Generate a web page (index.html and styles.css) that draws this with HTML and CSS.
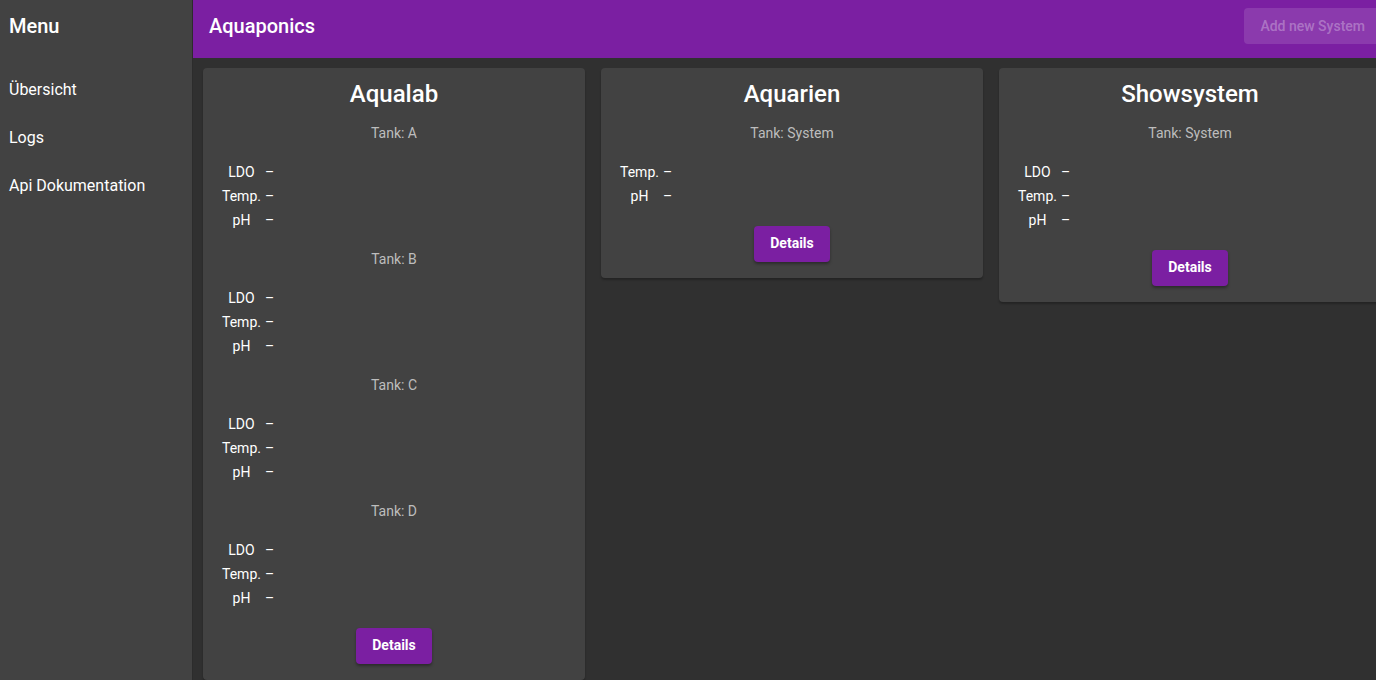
FILE: index.html
```html
<!DOCTYPE html>
<html lang="de">
<head>
<meta charset="utf-8">
<title>Aquaponics</title>
<link rel="stylesheet" href="styles.css">
</head>
<body>
<div class="app">
  <aside class="sidebar">
    <div class="menu-title">Menu</div>
    <nav class="menu">
      <a class="menu-item">Übersicht</a>
      <a class="menu-item">Logs</a>
      <a class="menu-item">Api Dokumentation</a>
    </nav>
  </aside>
  <div class="content">
    <header class="topbar">
      <div class="app-title">Aquaponics</div>
      <button class="add-btn" disabled>Add new System</button>
    </header>
    <main class="main">
      <section class="card">
        <h2 class="card-title">Aqualab</h2>
        <div class="tank">Tank: A</div>
        <table class="vals">
          <tr><th>LDO</th><td>–</td></tr>
          <tr><th>Temp.</th><td>–</td></tr>
          <tr><th>pH</th><td>–</td></tr>
        </table>
        <div class="tank">Tank: B</div>
        <table class="vals">
          <tr><th>LDO</th><td>–</td></tr>
          <tr><th>Temp.</th><td>–</td></tr>
          <tr><th>pH</th><td>–</td></tr>
        </table>
        <div class="tank">Tank: C</div>
        <table class="vals">
          <tr><th>LDO</th><td>–</td></tr>
          <tr><th>Temp.</th><td>–</td></tr>
          <tr><th>pH</th><td>–</td></tr>
        </table>
        <div class="tank">Tank: D</div>
        <table class="vals">
          <tr><th>LDO</th><td>–</td></tr>
          <tr><th>Temp.</th><td>–</td></tr>
          <tr><th>pH</th><td>–</td></tr>
        </table>
        <div class="actions"><button class="details">Details</button></div>
      </section>
      <section class="card">
        <h2 class="card-title">Aquarien</h2>
        <div class="tank">Tank: System</div>
        <table class="vals">
          <tr><th>Temp.</th><td>–</td></tr>
          <tr><th>pH</th><td>–</td></tr>
        </table>
        <div class="actions"><button class="details">Details</button></div>
      </section>
      <section class="card">
        <h2 class="card-title">Showsystem</h2>
        <div class="tank">Tank: System</div>
        <table class="vals">
          <tr><th>LDO</th><td>–</td></tr>
          <tr><th>Temp.</th><td>–</td></tr>
          <tr><th>pH</th><td>–</td></tr>
        </table>
        <div class="actions"><button class="details">Details</button></div>
      </section>
    </main>
  </div>
</div>
</body>
</html>
```
FILE: styles.css
```css
html, body {
  margin: 0;
  padding: 0;
  height: 100%;
  overflow: hidden;
  background: #303030;
  font-family: Roboto, "Liberation Sans", sans-serif;
  color: #fff;
}
.app {
  display: flex;
  height: 100%;
}
.sidebar {
  width: 192px;
  flex: none;
  background: #424242;
  border-right: 1px solid #2c2c2c;
}
.menu-title {
  height: 52px;
  line-height: 52px;
  padding-left: 9px;
  font-size: 20px;
  font-weight: 500;
}
.menu {
  display: flex;
  flex-direction: column;
  padding-top: 14px;
}
.menu-item {
  height: 48px;
  line-height: 48px;
  padding-left: 9px;
  font-size: 16px;
}
.content {
  flex: none;
  width: 1200px;
  display: flex;
  flex-direction: column;
}
.topbar {
  height: 58px;
  flex: none;
  background: #7b1fa2;
  display: flex;
  align-items: flex-start;
  justify-content: space-between;
  padding-left: 16px;
}
.app-title {
  font-size: 20px;
  font-weight: 500;
  line-height: 52px;
}
.add-btn {
  margin-top: 8px;
  margin-right: 12px;
  height: 36px;
  padding: 0 16px;
  border: none;
  border-radius: 4px;
  background: rgba(255, 255, 255, 0.12);
  color: rgba(255, 255, 255, 0.3);
  font-family: inherit;
  font-size: 14px;
  font-weight: 500;
}
.main {
  display: flex;
  align-items: flex-start;
  gap: 16px;
  padding: 10px;
}
.card {
  width: 382px;
  flex: none;
  box-sizing: border-box;
  background: #424242;
  border-radius: 4px;
  box-shadow: 0 2px 2px rgba(0, 0, 0, 0.25);
  padding: 9px 16px 16px;
}
.card-title {
  margin: 0 0 12px;
  text-align: center;
  font-size: 24px;
  font-weight: 500;
  line-height: 34px;
}
.tank {
  text-align: center;
  font-size: 14px;
  line-height: 20px;
  color: #bdbdbd;
  margin-bottom: 16px;
}
.vals {
  font-size: 14px;
  line-height: 20px;
  margin-bottom: 16px;
  color: #fff;
}
.vals th {
  font-weight: 400;
  text-align: center;
  padding: 1px;
}
.vals td {
  padding: 1px;
}
.actions {
  display: flex;
  justify-content: center;
  padding-top: 1px;
}
.details {
  height: 36px;
  width: 76px;
  padding: 0 0 2px;
  border: none;
  border-radius: 4px;
  background: #7b1fa2;
  color: #fff;
  font-family: inherit;
  font-size: 14px;
  font-weight: 700;
  box-shadow: 0 2px 3px rgba(0, 0, 0, 0.35);
}
```
